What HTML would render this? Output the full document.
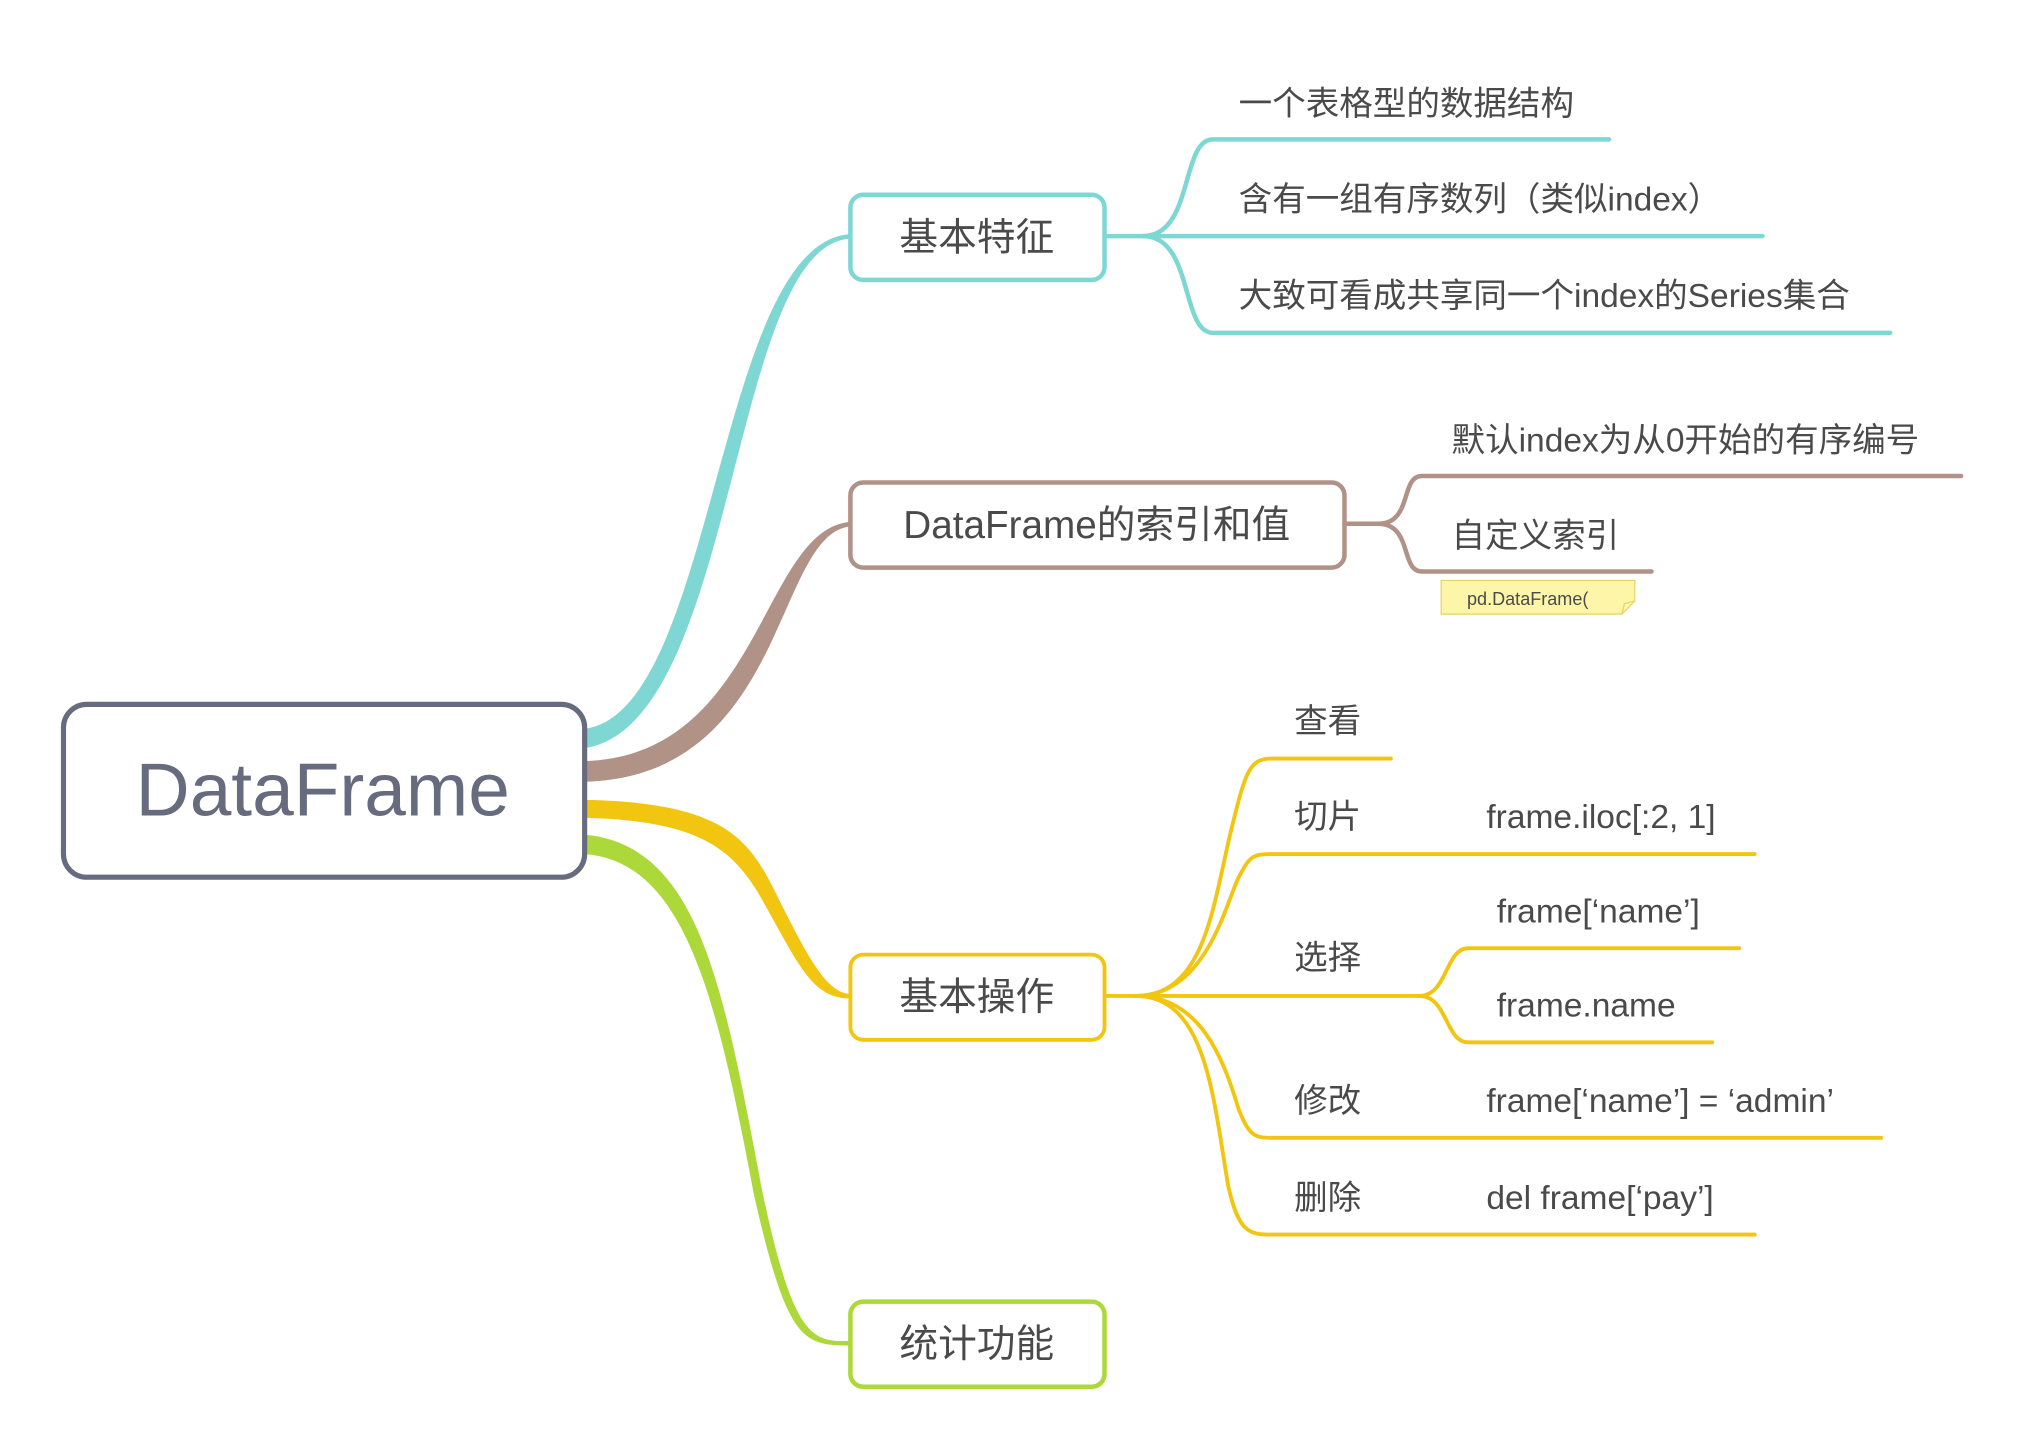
<!DOCTYPE html>
<html><head><meta charset="utf-8"><style>
html,body{margin:0;padding:0;background:#fff;}
svg{display:block}
text{font-family:"Liberation Sans","Noto Sans CJK SC",sans-serif;fill:#4a4a4a;}
</style></head><body>
<svg width="2022" height="1450" viewBox="0 0 1567 1124" xmlns="http://www.w3.org/2000/svg">
<path d="M453,565 C555,552 555,188 659,181.5 L659,185 C565,190 572,562 453,580 Z" fill="#7fd7d4"/>
<path d="M453,590 C590,586 590,410 659,404.5 L659,408 C600,414 610,602 453,606 Z" fill="#b09287"/>
<path d="M453,620 C560,622 580,650 600,690 C625,740 640,770 659,770.5 L659,774 C630,774 620,750 592,700 C570,660 545,636 453,634 Z" fill="#f2c511"/>
<path d="M453,647 C540,655 560,760 590,920 C615,1040 630,1040 659,1039.5 L659,1043 C622,1043 610,1040 584,925 C555,770 530,668 453,662 Z" fill="#acd83a"/>

<g fill="none" stroke-linecap="round">
<rect x="49" y="546" width="404" height="134" rx="18" stroke="#676b7e" stroke-width="4" fill="#fff"/>
<g stroke="#7fd7d4" stroke-width="3.5">
<rect x="659" y="151" width="197" height="66" rx="10" fill="#fff"/>
<path d="M856,183 H1366"/>
<path d="M886,183 C925,183 915,108 940,108 H1247"/>
<path d="M886,183 C925,183 915,258 940,258 H1465"/>
</g>
<g stroke="#b09287" stroke-width="3.5">
<rect x="659" y="374" width="383" height="66" rx="10" fill="#fff"/>
<path d="M1042,406 H1068 C1095,406 1085,369 1102,369 H1520"/>
<path d="M1068,406 C1095,406 1085,443 1102,443 H1280"/>
</g>
<g stroke="#f2c511" stroke-width="3">
<rect x="659" y="740" width="197" height="66" rx="10" fill="#fff"/>
<path d="M856,772 H1100 C1122,772 1120,735 1138,735 H1348"/>
<path d="M1100,772 C1122,772 1120,808 1138,808 H1327"/>
<path d="M880,772 C935,772 940,700 955,640 C965,600 968,588 985,588 H1078"/>
<path d="M880,772 C935,772 950,700 960,680 C968,665 970,662 985,662 H1360"/>
<path d="M880,772 C930,772 948,820 960,860 C968,880 972,882 985,882 H1458"/>
<path d="M880,772 C935,772 940,850 952,920 C960,955 968,957 985,957 H1360"/>
</g>
<rect x="659" y="1009" width="197" height="66" rx="10" fill="#fff" stroke="#acd83a" stroke-width="3.5"/>
<path d="M1117,450 H1267 V466 L1257,476 H1117 Z" fill="#fdf6a9" stroke="#e6d66a" stroke-width="1"/>
<path d="M1257,476 L1259,468 L1267,466" stroke="#e6d66a" stroke-width="1"/>
</g>

<text x="250" y="632" font-size="58" text-anchor="middle" style="fill:#676b7e">DataFrame</text>
<text x="757" y="194" font-size="30" text-anchor="middle">基本特征</text>
<text x="850" y="417" font-size="30" text-anchor="middle">DataFrame的索引和值</text>
<text x="757" y="783" font-size="30" text-anchor="middle">基本操作</text>
<text x="757" y="1052" font-size="30" text-anchor="middle">统计功能</text>

<g font-size="26">
<text x="960" y="89">一个表格型的数据结构</text>
<text x="960" y="163">含有一组有序数列（类似index）</text>
<text x="960" y="238">大致可看成共享同一个index的Series集合</text>
<text x="1125" y="350">默认index为从0开始的有序编号</text>
<text x="1125" y="424">自定义索引</text>
<text x="1003" y="568">查看</text>
<text x="1003" y="642">切片</text>
<text x="1152" y="642">frame.iloc[:2, 1]</text>
<text x="1003" y="751">选择</text>
<text x="1160" y="715">frame[‘name’]</text>
<text x="1160" y="788">frame.name</text>
<text x="1003" y="862">修改</text>
<text x="1152" y="862">frame[‘name’] = ‘admin’</text>
<text x="1003" y="937">删除</text>
<text x="1152" y="937">del frame[‘pay’]</text>
</g>
<text x="1137" y="469" font-size="14">pd.DataFrame(</text>
</svg>
</body></html>
